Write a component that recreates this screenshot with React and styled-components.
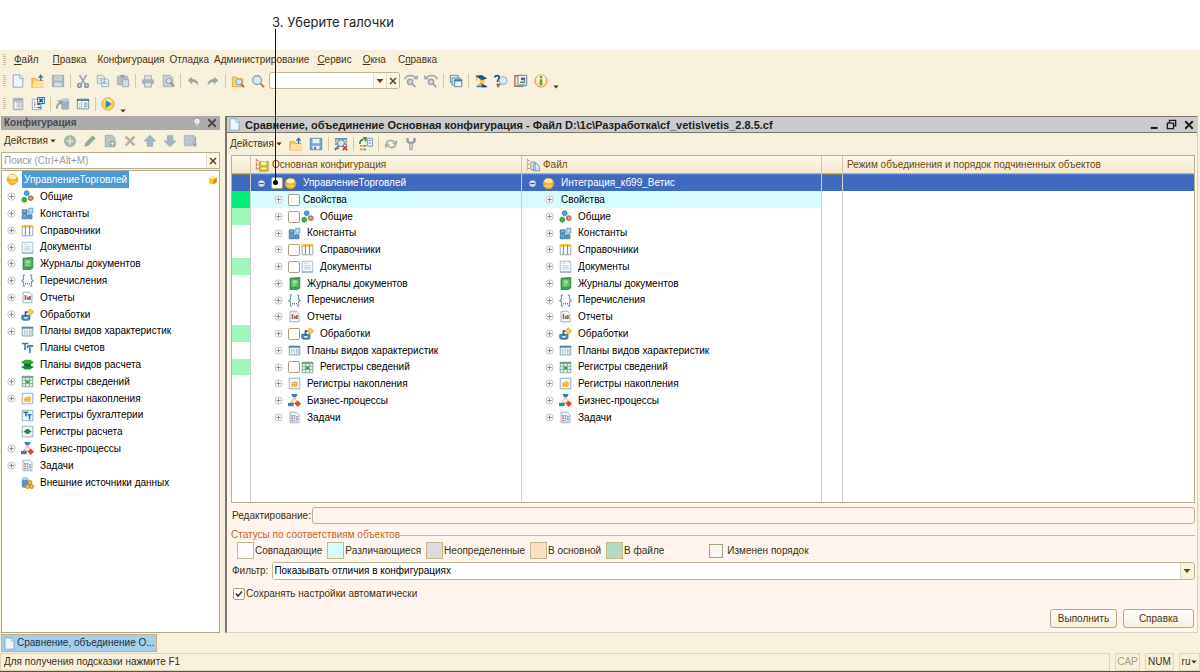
import React, { useState } from 'react';
import styled, { createGlobalStyle, css } from 'styled-components';

const GlobalStyle = createGlobalStyle`
  * {
    box-sizing: border-box;
  }

  body {
    margin: 0;
    background: #ffffff;
    color: #4a3510;
    font-family: 'Liberation Sans', Arial, sans-serif;
    font-size: 10px;
    line-height: 14px;
  }

  button, input, select {
    font: inherit;
    color: inherit;
  }

  svg {
    flex: none;
  }
`;

const Page = styled.div`
  display: flex;
  flex-direction: column;
  min-height: 100vh;
  position: relative;
`;

const Note = styled.div`
  height: 50px;
  padding: 12px 0 0 272px;
  color: #1c1c1c;
  font-family: Inter, 'Noto Sans', sans-serif;
  font-size: 13px;
  line-height: 20px;
`;

const Pointer = styled.div`
  position: absolute;
  z-index: 2;
  top: 29px;
  left: 275px;
  width: 1px;
  height: 153px;
  background: #111111;

  &::after {
    content: '';
    position: absolute;
    bottom: -3px;
    left: -2px;
    width: 5px;
    height: 5px;
    border-radius: 50%;
    background: #000000;
  }
`;

const Shell = styled.div`
  flex: 1;
  display: flex;
  flex-direction: column;
  background: #f7f0dd;
  border-bottom: 1px solid #4f564f;
`;

const Bar = styled.div`
  display: flex;
  align-items: center;
  height: ${props => props.height || 23}px;
  padding-left: ${props => props.indent || 0}px;
`;

const Grip = styled.span`
  width: 3px;
  height: 12px;
  margin: 0 2px 0 3px;
  background: repeating-linear-gradient(#cdc3a4 0 1px, transparent 1px 2px);
`;

const Separator = styled.span`
  width: 1px;
  height: 14px;
  margin: 0 2px;
  background: #d3c9a8;
`;

const PlainButton = styled.button`
  display: flex;
  align-items: center;
  justify-content: center;
  padding: 0;
  border: 0;
  background: none;
  white-space: nowrap;
`;

const MenuItem = styled(PlainButton)`
  margin-left: ${props => props.gap}px;
`;

const ToolButton = styled(PlainButton)`
  width: 20px;
  height: 20px;
`;

const ActionsButton = styled(PlainButton)`
  gap: 2px;
  margin-right: 4px;
`;

const OverflowButton = styled(PlainButton)`
  align-self: flex-end;
  width: 10px;
  height: 10px;
`;

const SearchCombo = styled.div`
  display: flex;
  width: 131px;
  height: 17px;
  margin: 0 1px;
  border: 1px solid #bdb690;
  border-radius: 3px;
  background: #ffffff;
  overflow: hidden;
`;

const BareInput = styled.input`
  flex: 1;
  min-width: 0;
  padding: 0 2px;
  border: 0;
  outline: 0;
  background: transparent;

  &::placeholder {
    color: #9b9b9b;
    opacity: 1;
  }
`;

const ComboButton = styled(PlainButton)`
  width: 13px;
  border-left: 1px solid #e2dcc4;
  background: #fbf7ea;
  color: #5f420c;
`;

const Workspace = styled.main`
  flex: 1;
  display: flex;
  gap: 5px;
  padding: 0 2px 0 1px;
`;

const SidePanel = styled.aside`
  display: flex;
  flex-direction: column;
  flex: 0 0 219px;
`;

const PanelTitle = styled.div`
  display: flex;
  align-items: center;
  height: 14px;
  padding: 0 3px;
  background: #ababab;
  color: #4b4b4b;
  font-weight: bold;

  span {
    flex: 1;
  }
`;

const SearchBox = styled.div`
  display: flex;
  height: 17px;
  border: 1px solid #b6b08c;
  background: #ffffff;
`;

const Tree = styled.ul`
  flex: 1;
  margin: 1px 0 0;
  padding: 0;
  border: 1px solid #aca98c;
  background: #ffffff;
  color: #000000;
  list-style: none;
`;

const TreeRow = styled.li`
  display: flex;
  align-items: center;
  height: 17px;
  padding: 0 1px 0 ${props => (props.$root ? 4 : 2)}px;

  &:nth-child(5n) {
    height: 16px;
  }
`;

const TreeLabel = styled.span`
  margin-left: 6px;
  white-space: nowrap;
`;

const SelectedLabel = styled.span`
  margin: 0 auto 0 3px;
  padding: 0 2px;
  background: #4a9bd6;
  color: #ffffff;
  line-height: 17px;
`;

const Expander = styled(PlainButton)`
  width: 14px;
  height: 14px;
  margin-right: 3px;
`;

const ExpanderGap = styled.span`
  width: 17px;
`;

const Panel = styled.section`
  flex: 1;
  min-width: 0;
  display: flex;
  flex-direction: column;
  border: solid #77776e;
  border-width: 1px 0 0 2px;
  border-right: 1px solid #d5d2c8;
  border-bottom: 1px solid #d5d2c8;
`;

const WindowTitle = styled.div`
  display: flex;
  align-items: center;
  gap: 4px;
  height: 16px;
  padding-left: 1px;
  border-bottom: 1px solid #77776e;
  background: #cbcbcb;
  color: #1d1d1d;

  h1 {
    flex: 1;
    margin: 0;
    font-size: 11px;
    white-space: nowrap;
    overflow: hidden;
  }
`;

const WindowButtons = styled.div`
  display: flex;
  gap: 2px;
`;

const WindowButton = styled(PlainButton)`
  width: 16px;
  height: 14px;
`;

const Body = styled.div`
  flex: 1;
  display: flex;
  flex-direction: column;
  padding: 0 2px 4px 4px;
  background: #fff5ee;
  color: #3b2f14;
`;

const TableWrap = styled.div`
  flex: 1;
  display: grid;
  border: 1px solid #b6b08c;
  background: #ffffff;
`;

const Table = styled.table`
  width: 100%;
  height: 100%;
  table-layout: fixed;
  border-collapse: separate;
  border-spacing: 0;
`;

const Column = styled.col`
  width: ${props => props.$size};
`;

const HeadCell = styled.th`
  height: 18px;
  padding: 0 0 0 4px;
  border-right: 1px solid #cfc8ae;
  border-bottom: 1px solid #c0b184;
  background: linear-gradient(#faf6ea, #f6e9cf);
  color: #6b4a0c;
  font-weight: normal;
  text-align: left;

  &:last-child {
    border-right: 0;
  }
`;

const HeadContent = styled.span`
  display: flex;
  align-items: center;
  gap: 3px;
`;

const Cell = styled.td`
  padding: 0;
  border-right: 1px solid #d0d0d0;
  background: ${props => props.$fill || 'transparent'};

  &:last-child {
    border-right: 0;
  }
`;

const Row = styled.tr`
  height: 17px;
  color: #000000;

  &:nth-child(4n) {
    height: 16px;
  }

  ${props => props.$selected && css`
    color: #ffffff;

    ${Cell} {
      background: #3e6bbf;
      border-top: 1px dotted #8d9a80;
    }
  `}
`;

const FillerRow = styled.tr`
  height: auto;
`;

const CellContent = styled.div`
  display: flex;
  align-items: center;
  height: 14px;
  padding-left: ${props => props.$indent}px;
  white-space: nowrap;
`;

const CellLabel = styled.label`
  margin-left: ${props => props.$gap}px;
`;

const Check = styled.input`
  appearance: none;
  width: 12px;
  height: 12px;
  margin: 0 1px 0 0;
  border: 1px solid #ab9f7d;
  border-radius: 2px;
  background: #ffffff;
`;

const Field = styled.div`
  display: flex;
  align-items: center;
  gap: ${props => props.$gap}px;
  margin-top: ${props => props.$top}px;
  padding-left: 1px;
`;

const TextInput = styled.input`
  flex: 1;
  min-width: 0;
  height: 17px;
  border: 1px solid #b9b592;
  border-radius: 3px;
  background: #fff5ee;
`;

const Statuses = styled.fieldset`
  display: flex;
  align-items: center;
  min-width: 0;
  margin: 4px 0 0;
  padding: 0 0 0 6px;
  border: 0;
  border-top: 1px solid #c2c0a2;

  legend {
    margin-left: -6px;
    padding: 0;
    color: #c0661c;
  }
`;

const Status = styled.span`
  display: flex;
  align-items: center;
  gap: 1px;
  margin-right: 5px;
  white-space: nowrap;

  &::before {
    content: '';
    width: 15px;
    height: 15px;
    border: 1px solid #c3b990;
    background: ${props => props.$color};
  }
`;

const OrderLabel = styled.label`
  display: flex;
  align-items: center;
  gap: 4px;
  margin-left: 40px;
`;

const OrderCheck = styled(Check)`
  width: 14px;
  height: 14px;
  margin: 0;
  border-radius: 0;
  background: #f8f6f6;
`;

const SelectBox = styled.div`
  flex: 1;
  display: grid;
  grid-template-columns: 1fr 14px;
  align-items: center;
  height: 18px;
  border: 1px solid #b9b592;
  border-radius: 3px;
  background: #ffffff;
  overflow: hidden;

  svg {
    grid-area: 1 / 2;
    justify-self: center;
    pointer-events: none;
    color: #5f420c;
  }
`;

const Select = styled.select`
  grid-area: 1 / 1 / 2 / 3;
  appearance: none;
  height: 16px;
  padding: 0 1px;
  border: 0;
  outline: 0;
  background: linear-gradient(to left, #f8f1de 13px, #ded8c0 13px 14px, #ffffff 14px);
  color: #000000;
`;

const AutoSave = styled.label`
  display: flex;
  align-items: center;
  gap: 1px;
  height: 14px;
  margin: 7px 0 0 2px;
`;

const TickBox = styled.span`
  display: grid;

  input, svg {
    grid-area: 1 / 1;
  }

  input {
    margin: 0;
  }

  svg {
    place-self: center;
    pointer-events: none;
    visibility: ${props => (props.$on ? 'visible' : 'hidden')};
  }
`;

const Footer = styled.div`
  display: flex;
  justify-content: flex-end;
  gap: 6px;
  margin-top: 8px;
  padding-right: 1px;
`;

const PushButton = styled.button`
  min-width: ${props => props.$width}px;
  height: 19px;
  padding: 0 6px;
  border: 1px solid #b0ab85;
  border-radius: 3px;
  background: linear-gradient(#ffffff, #f6f0dc);
  color: #4a3510;
`;

const TaskBar = styled.div`
  display: flex;
  align-items: center;
  height: 20px;
  padding-left: 1px;
`;

const TaskButton = styled(PlainButton)`
  gap: 1px;
  min-width: 151px;
  height: 18px;
  padding: 0 1px;
  justify-content: flex-start;
  border: 1px solid #c2b187;
  background: #a6cdea;
  color: #1e3242;
`;

const StatusBar = styled.footer`
  display: flex;
  gap: 5px;
  height: 18px;
`;

const StatusCell = styled.div`
  display: flex;
  align-items: center;
  justify-content: ${props => (props.$wide ? 'flex-start' : 'center')};
  flex: ${props => (props.$wide ? '1' : 'none')};
  min-width: ${props => props.$width || 0}px;
  gap: 1px;
  padding: 0 ${props => (props.$wide ? 3 : 1)}px;
  border: 1px solid #ddd5b8;
  color: ${props => (props.$off ? '#ab9f78' : '#3f2f10')};
`;

const sheet = (fill = '#f6fafd', line = '#8ba3b5') => (
    <path d="M2.5 1.5h8l3 3v10h-11z" fill={fill} stroke={line} />
);

const lens = (x, y) => (
    <>
        <path d={`M${x + 2} ${y + 2}l4 4`} stroke="#b5694a" strokeWidth="2" />
        <circle cx={x} cy={y} r="3.5" fill="#cfe5f5" stroke="#8295a8" />
    </>
);

const folder = (
    <path d="M1.5 3.5h5l1 2h6v9h-12z" fill="#f6d277" stroke="#d6a748" />
);

const icons = {
    file: (
        <>
            <path d="M2.5 1h8l3 3v11h-11z" fill="#eef6fd" stroke="#7fa1bf" />
            <path d="M10 1v4h4" fill="#ffffff" stroke="#7fa1bf" />
        </>
    ),
    open: (
        <>
            <path d="M1 5h5l1 2h7v8H1z" fill="#f4c65c" stroke="#d9ab50" />
            <path d="M3 8h12v7H1.500z" fill="#fbe19a" />
            <path d="M11 8V2M8.500 4.500L11 1.500l2.500 3" fill="none" stroke="#3d7796" strokeWidth="1.500" />
        </>
    ),
    saveOff: (
        <>
            <path d="M1.500 1.500h13v13h-13z" fill="#aebac5" stroke="#9aa8b5" />
            <path d="M4 2h8v5H4zM4 10h8v4H4z" fill="#d9dfe3" />
            <path d="M5 3.500h6M5 5.500h6" stroke="#a8b1b9" />
        </>
    ),
    save: (
        <>
            <path d="M1.500 1.500h13v13h-13z" fill="#7ba6cb" stroke="#5480a8" />
            <path d="M4 2h8v5H4zM4 10h8v4H4z" fill="#e4eff8" />
            <path d="M6 11h2v3H6z" fill="#4674a0" />
        </>
    ),
    cut: (
        <>
            <path d="M4 1l6 10M12 1L6 11" stroke="#9aa7b4" strokeWidth="2" />
            <circle cx="4" cy="13" r="2" fill="none" stroke="#8499b0" strokeWidth="2" />
            <circle cx="12" cy="13" r="2" fill="none" stroke="#8499b0" strokeWidth="2" />
        </>
    ),
    copy: (
        <>
            <path d="M1.500 1.500h6l2 2v7h-8zM6.500 5.500h6l2 2v7h-8z" fill="#e9f0f4" stroke="#93a8bb" />
            <path d="M3 5h4M3 7h3M8 9h5M8 11h5" stroke="#9cb3c5" />
        </>
    ),
    paste: (
        <>
            <path d="M1.500 2.500h12v10h-12z" fill="#b4bdc4" stroke="#a7b1ba" />
            <path d="M5 1h5v3H5z" fill="#96a2ad" />
            <path d="M7.500 6.500h7v8h-7z" fill="#d5dadb" stroke="#9aa6b0" />
        </>
    ),
    print: (
        <>
            <path d="M4 2h8v5H4z" fill="#dde2e5" stroke="#a3adb5" />
            <rect x="1" y="6" width="14" height="6" rx="2" fill="#a6b2bc" />
            <path d="M4 10h8v5H4z" fill="#d9dfe2" stroke="#9ca8b2" />
        </>
    ),
    preview: (
        <>
            {sheet('#c5cdd2', '#a3aeb7')}
            <circle cx="9" cy="8" r="3" fill="#dce1e3" stroke="#8796a4" />
            <path d="M11 10l4 4" stroke="#a18a86" strokeWidth="2" />
        </>
    ),
    undo: <path d="M2 7l5-4v3c5 0 7 2 7 7-2-3-4-4-7-4v3z" fill="#98aaa0" />,
    redo: <path d="M14 7L9 3v3c-5 0-7 2-7 7 2-3 4-4 7-4v3z" fill="#98aaa0" />,
    folderFind: <>{folder}{lens(9, 9)}</>,
    find: (
        <>
            <path d="M10 10l5 5" stroke="#b5694a" strokeWidth="2" />
            <circle cx="7" cy="7" r="5" fill="#d8eafa" stroke="#8f9fb0" strokeWidth="1.500" />
        </>
    ),
    findNext: (
        <>
            <path d="M1 6c1-5 11-6 13 0" fill="none" stroke="#a5b0ba" strokeWidth="2" />
            <path d="M10 6h6V1z" fill="#a5b0ba" />
            <circle cx="7" cy="9" r="3" fill="#ccd5dc" stroke="#9aa5ae" strokeWidth="1.500" />
            <path d="M9 11l4 4" stroke="#a89c9a" strokeWidth="2" />
        </>
    ),
    findPrev: (
        <>
            <path d="M15 6C14 1 4 0 2 6" fill="none" stroke="#a5b0ba" strokeWidth="2" />
            <path d="M6 6H0V1z" fill="#a5b0ba" />
            <circle cx="8" cy="9" r="3" fill="#ccd5dc" stroke="#9aa5ae" strokeWidth="1.500" />
            <path d="M10 11l4 4" stroke="#a89c9a" strokeWidth="2" />
        </>
    ),
    windows: (
        <>
            <path d="M1.500 1.500h9v8h-9z" fill="#d4e5f2" stroke="#5a86a8" />
            <path d="M3.500 4.500h9v8h-9z" fill="#d4e5f2" stroke="#5a86a8" />
            <path d="M6.500 6.500h8v8h-8z" fill="#f2f8fc" stroke="#47799e" />
            <path d="M6 7.500h9" stroke="#47799e" strokeWidth="2" />
        </>
    ),
    graduate: (
        <>
            <path d="M6 6h6v5H7z" fill="#f5c26b" />
            <path d="M1 2l8-1 6 4-6 2z" fill="#235778" />
            <path d="M3 3v5" stroke="#d99c34" />
            <path d="M2 15l6-5 6 5z" fill="#2e83b8" />
            <path d="M2 13l6-3 1 4z" fill="#eeb04b" />
            <path d="M9 11l6 3v1H9z" fill="#174d70" />
        </>
    ),
    helpFind: (
        <>
            <path d="M1 4c0-3 5-3 5 0 0 2-2 2-2 5M4 11v2" fill="none" stroke="#235778" strokeWidth="2" />
            <path d="M7 11l-3 4" stroke="#b5694a" strokeWidth="2" />
            <circle cx="10.500" cy="7.500" r="4.500" fill="#d8eafa" stroke="#8fa5b8" />
        </>
    ),
    book: (
        <>
            <path d="M1 2h9v12H1z" fill="#f5e4d0" stroke="#b0714d" strokeWidth="1.500" />
            <path d="M4.500 1.500h10v12h-10z" fill="#eef6fb" stroke="#4c7ca3" />
            <path d="M8 4h4v3H8z" fill="#2b6fb3" />
            <path d="M7 9.500h6" stroke="#3f9b54" strokeWidth="2" />
            <path d="M12 4v4" stroke="#cf4a35" strokeWidth="1.500" />
            <path d="M6 12h7" stroke="#7ba6c8" />
        </>
    ),
    info: (
        <>
            <circle cx="8" cy="8" r="7" fill="#f9e29a" stroke="#d08a58" />
            <circle cx="8" cy="6" r="5" fill="#fdf3cf" />
            <path d="M8 6v7" stroke="#6f9a35" strokeWidth="3" />
            <circle cx="8" cy="3.500" r="1.500" fill="#6f9a35" />
        </>
    ),
    config: (
        <>
            <path d="M2.500 1.500h11v13h-11z" fill="#c6ccd0" stroke="#a5adb3" />
            <path d="M3 3h10" stroke="#a0a9b0" strokeWidth="2" />
            <path d="M5 6v6h3M5 8h3M10 8h2M10 12h2" fill="none" stroke="#f2f2ee" strokeWidth="1.500" />
        </>
    ),
    configTree: (
        <>
            <path d="M1.500 2.500h10v12h-10z" fill="#ffffff" stroke="#7fa3c0" />
            <path d="M4 5v7h5M4 8h3" fill="none" stroke="#b6664a" strokeDasharray="2 1" />
            <path d="M7 8.500h4M8 12h4" stroke="#3c80b6" strokeWidth="2" />
            <path d="M7.500.500h8v7h-8z" fill="#d8ebf8" stroke="#1d5f90" />
            <path d="M9.500 2l4 4M13.500 2l-4 4" stroke="#174d78" strokeWidth="1.500" />
        </>
    ),
    database: (
        <>
            <path d="M6 3v10c0 2 9 2 9 0V3z" fill="#9fb1c1" />
            <ellipse cx="10.500" cy="3" rx="4.500" ry="2" fill="#bfcbd5" />
            <path d="M1 13c0-5 2-6 5-6" fill="none" stroke="#8ba09a" strokeWidth="2" />
            <path d="M1 4h6v5z" fill="#8ba09a" />
        </>
    ),
    windowForm: (
        <>
            <path d="M1.500 2.500h13v11h-13z" fill="#f7fafc" stroke="#6789a4" />
            <path d="M1 3.500h14" stroke="#4a7ba1" strokeWidth="2" />
            <path d="M6.500 5v8" stroke="#9ab0c1" />
            <path d="M9 7h4M9 9h4M9 11h4" stroke="#5d8bb0" />
            <path d="M3 8h2M3 11h2" stroke="#cc7b4e" />
        </>
    ),
    play: (
        <>
            <circle cx="8" cy="8" r="7" fill="#fbd257" stroke="#dfa03c" />
            <path d="M3 6c2-5 8-5 10 0z" fill="#fdf0b7" />
            <path d="M5.500 3.500l6.500 4.500-6.500 4.500z" fill="#2f87b4" />
        </>
    ),
    add: (
        <>
            <circle cx="8" cy="8" r="7" fill="#a9b6ae" />
            <path d="M8 4v8M4 8h8" stroke="#dbe2da" strokeWidth="2" />
        </>
    ),
    edit: <path d="M2 14l1-4 8-8 3 3-8 8z" fill="#8ea99a" stroke="#a0b2ac" />,
    addCopy: (
        <>
            {sheet('#bac4ca', '#9faab2')}
            <circle cx="11" cy="11" r="4" fill="#9db4a4" />
            <path d="M11 9v4M9 11h4" stroke="#edf0ea" />
        </>
    ),
    remove: <path d="M3 3l10 10M13 3L3 13" stroke="#bcb0aa" strokeWidth="3" />,
    up: <path d="M8 1.500L14.500 8H11v6H5V8H1.500z" fill="#a3b7c8" stroke="#97abbd" />,
    down: <path d="M8 14.500L1.500 8H5V2h6v6h3.500z" fill="#a3b7c8" stroke="#97abbd" />,
    sort: (
        <>
            <path d="M1 1h12v13H1z" fill="#b1bcc6" />
            <path d="M1 5h12M1 9h12M5 1v13M9 1v13" stroke="#c5cdd3" />
            <path d="M14 3v8" stroke="#8a9bab" strokeWidth="1.500" />
            <path d="M11.500 11H16l-2 4z" fill="#8a9bab" />
        </>
    ),
    cube: (
        <>
            <path d="M2 5l5-3 7 2v7l-5 4-7-2z" fill="#f6c21c" />
            <path d="M9 7l5-3v7l-5 4z" fill="#cf8d0a" />
            <path d="M2 5l5-3 7 2-5 3z" fill="#ffe873" />
        </>
    ),
    ball: (
        <>
            <circle cx="8" cy="8" r="6.500" fill="#f1a91f" stroke="#e0a443" />
            <ellipse cx="8" cy="5" rx="5" ry="3" fill="#ffedb4" />
            <ellipse cx="8" cy="11" rx="5" ry="2" fill="#fbc648" />
        </>
    ),
    common: (
        <>
            <circle cx="7" cy="4" r="3" fill="#4aa2dc" stroke="#2f80b9" />
            <circle cx="4" cy="12" r="3" fill="#34bd3c" stroke="#17902c" />
            <circle cx="12" cy="10" r="3" fill="#cb7e58" stroke="#a65b3d" />
            <circle cx="12" cy="10" r="1" fill="#f2d3b8" />
        </>
    ),
    constants: (
        <>
            <path d="M1.500 3.500h6v5h-6zM1.500 9.500h6v5h-6zM8.500 9.500h5v5h-5z" fill="#5b9ac6" stroke="#3c77a3" />
            <path d="M9.500 1.500h5v6h-5z" fill="#b9daf0" stroke="#5b96c0" />
            <path d="M3 5h3M3 11h3" stroke="#a9d1ec" />
        </>
    ),
    catalogs: (
        <>
            <path d="M1.500 2.500h13v12h-13z" fill="#ffffff" stroke="#8499a8" />
            <path d="M1 3h14" stroke="#f2c52c" strokeWidth="3" />
            <path d="M5.500 2v12M10.500 2v12" stroke="#7e97aa" strokeWidth="1.500" />
        </>
    ),
    documents: (
        <>
            <path d="M1.500 1.500h13v13h-13z" fill="#f4f9fd" stroke="#9ab2c6" />
            <path d="M4 4h4M4 7h8M4 9h8M4 11h8" stroke="#b4cadb" />
            <path d="M1 15h14" stroke="#7895ad" />
        </>
    ),
    journals: (
        <>
            <path d="M2.500 1.500l12-1v13l-3 2h-9z" fill="#34a053" stroke="#2c8443" />
            <path d="M4 3h9v9H4z" fill="#63c368" />
            <path d="M6 5h5M6 7h5M6 10h3" stroke="#d6f2d0" />
        </>
    ),
    enums: (
        <>
            <path d="M5 1.500H3v5l-2 2 2 1v5h2M11 1.500h2v5l2 2-2 1v5h-2" fill="none" stroke="#7d9cb5" strokeWidth="1.500" />
            <path d="M5 12h1M7.500 12h1M10 12h1" stroke="#315b80" strokeWidth="2" />
        </>
    ),
    reports: (
        <>
            {sheet()}
            <path d="M5.500 5v6" stroke="#d04444" strokeWidth="2" />
            <path d="M8.500 7v4" stroke="#3c8852" strokeWidth="2" />
            <path d="M11 6v5" stroke="#c5462e" strokeWidth="2" />
        </>
    ),
    processing: (
        <>
            <path d="M1 9h10v5l-2 1H3l-2-1z" fill="#4f8fbd" stroke="#2d658f" />
            <path d="M4 11h4v2H4z" fill="#e5f2fa" />
            <path d="M5.500 11V5h4" fill="none" stroke="#385a73" strokeWidth="2" />
            <path d="M11.500 1l4 4-4 4-4-4z" fill="#fbd04a" stroke="#d7a02a" />
        </>
    ),
    charKinds: (
        <>
            <path d="M1.500 2.500h13v11h-13z" fill="#ecf3f8" stroke="#7593aa" />
            <path d="M1 3.500h14" stroke="#55809f" strokeWidth="2" />
            <path d="M4.500 6v6M7.500 6v6M10.500 6v6M12.500 6v6" stroke="#a0b5c5" />
        </>
    ),
    accounts: (
        <path d="M1 3h8M5 3v8M8 6h6v1M11 6v9M8 6v3" fill="none" stroke="#3f7fae" strokeWidth="2" />
    ),
    calcKinds: (
        <>
            <path d="M0 11l5-2h6l5 2-5 3H5z" fill="#1c8a30" />
            <path d="M0 5l5-3h6l5 3-5 4H5z" fill="#2fae3a" />
            <path d="M4 7h8v3H4z" fill="#14702a" />
        </>
    ),
    infoRegs: (
        <>
            <path d="M1.500 1.500h13v13h-13z" fill="#e4f1ea" stroke="#7b9c92" />
            <path d="M1 2.500h14" stroke="#6f9888" strokeWidth="2" />
            <path d="M1 6.500h14M1 10.500h14M5.500 2v12M10.500 2v12" stroke="#74ad8a" />
            <path d="M6 7h4v3H6z" fill="#3ca15a" />
        </>
    ),
    accumRegs: (
        <>
            <path d="M1.500 1.500h13v13h-13z" fill="#f3f8fc" stroke="#829fb7" />
            <path d="M4 8c0-2 8-4 8-1v3c0 3-8 3-8 1z" fill="#efa81f" />
            <path d="M5 8c2 1 5 0 6-2M5 11c2 1 5 0 6-2" fill="none" stroke="#ffe48a" />
        </>
    ),
    acctRegs: (
        <>
            <path d="M1.500 1.500h13v13h-13z" fill="#edf5fb" stroke="#829fb7" />
            <path d="M3 4h6M6 4v5M8 7h5M10.500 7v6" stroke="#2f77ad" strokeWidth="2" />
        </>
    ),
    calcRegs: (
        <>
            <path d="M1.500 1.500h13v13h-13z" fill="#f3f8fc" stroke="#829fb7" />
            <path d="M3 8l4-3h2l4 3-4 3H7z" fill="#258e38" />
        </>
    ),
    business: (
        <>
            <path d="M4 0h8l-2 4H6z" fill="#2f83b8" />
            <path d="M8 4L3 11h9z" fill="#fbeedd" stroke="#d09a78" />
            <path d="M0 11h7v4H0z" fill="#3b7fb4" />
            <path d="M12 8l4 4-4 4-4-4z" fill="#df4827" />
        </>
    ),
    tasks: (
        <>
            {sheet()}
            <path d="M5 5v8" stroke="#c76d64" strokeDasharray="2 1" strokeWidth="2" />
            <path d="M8 5v8M11 6v7" stroke="#7596b1" strokeDasharray="2 1" strokeWidth="2" />
        </>
    ),
    external: (
        <>
            <path d="M1 3v10c0 2 8 2 8 0V3z" fill="#4e98cd" />
            <ellipse cx="5" cy="3" rx="4" ry="2" fill="#a7d4ef" />
            <circle cx="11" cy="8" r="2.500" fill="#f2bd3e" stroke="#b97a19" />
            <circle cx="8" cy="13" r="2.500" fill="#f2bd3e" stroke="#b97a19" />
            <circle cx="13" cy="13" r="2.500" fill="#f2bd3e" stroke="#b97a19" />
        </>
    ),
    compare: (
        <>
            <path d="M1 2h14M1 8h3M12 8h3M1 13h5" stroke="#5b97c4" strokeWidth="2" />
            <circle cx="8" cy="7" r="4" fill="#d2e5f2" stroke="#47718e" />
            <path d="M5 10l-4 5" stroke="#b5694a" strokeWidth="2" />
            <path d="M1 5h2M13 5h2" stroke="#d06b3d" strokeWidth="2" />
            <path d="M10 10l5 5M15 10l-5 5" stroke="#dc3a2a" strokeWidth="2" />
        </>
    ),
    merge: (
        <>
            <path d="M1 8c0-3 1-5 4-5" fill="none" stroke="#2c9550" strokeWidth="2" />
            <path d="M4 0h5L8 6z" fill="#2c9550" />
            <path d="M9.500 1.500h6v9h-6z" fill="#e8f2fa" stroke="#6a91b0" />
            <path d="M11 4h3M11 7h3" stroke="#6a91b0" />
            <path d="M1 10h3M1 14h3" stroke="#d49a32" strokeWidth="2" />
            <path d="M5 10h3M5 14h3" stroke="#4ea463" strokeWidth="2" />
        </>
    ),
    refresh: (
        <>
            <path d="M3 8c0-5 6-5 9-2M13 8c0 5-6 5-9 2" fill="none" stroke="#a4b3a7" strokeWidth="2" />
            <path d="M9 8h6V3zM7 8H1v5z" fill="#a4b3a7" />
        </>
    ),
    wrench: (
        <>
            <path d="M4 1v4l3 2h2l3-2V1" fill="none" stroke="#9da5a8" strokeWidth="3" />
            <path d="M8 7v8" stroke="#9da5a8" strokeWidth="4" />
            <path d="M8 8v6" stroke="#dfe3e3" strokeWidth="1.500" />
        </>
    ),
    mainConfig: (
        <>
            <path d="M1.500 1v13M2 3h3M2 7h3M2 12h3" stroke="#b45936" strokeDasharray="2 1" />
            <path d="M5 4h10v11H5z" fill="#d8b932" stroke="#b19c2c" />
            <path d="M7 4h6v4H7z" fill="#f7f0bd" />
            <path d="M7 11h6v2H7z" fill="#fff3a8" />
        </>
    ),
    fileConfig: (
        <>
            <path d="M1.500 1v13M2 3h3M2 7h3M2 12h3" stroke="#c7764e" strokeDasharray="2 1" />
            <path d="M5.500 4.500h5v9h-5zM8.500 6.500h4l3 3v5h-7z" fill="#dcebf7" stroke="#6e94b5" />
        </>
    ),
    pin: (
        <>
            <circle cx="8" cy="5" r="4" fill="#f5f5f5" />
            <circle cx="8" cy="5" r="1" fill="#9b9b9b" />
            <path d="M8 9v4" stroke="#d8d8d8" strokeWidth="2" />
        </>
    ),
    close: <path d="M2 2l12 12M14 2L2 14" stroke="currentColor" strokeWidth="3" />,
    minimize: <path d="M4 13h10" stroke="currentColor" strokeWidth="3" />,
    restore: (
        <>
            <path d="M5 6V2h9v8h-3" fill="none" stroke="currentColor" strokeWidth="2" />
            <path d="M2 6h9v8H2z" fill="none" stroke="currentColor" strokeWidth="2" />
        </>
    ),
    caret: <path d="M1 4h14l-7 8z" fill="currentColor" />,
    tick: <path d="M2 7l4 5 8-9" fill="none" stroke="#2b2b2b" strokeWidth="3" />,
    plus: (
        <>
            <circle cx="8" cy="8" r="6.500" fill="#fbfbfb" stroke="#b9b9b9" strokeWidth="1.500" />
            <path d="M8 4v8M4 8h8" stroke="#7c7c7c" strokeWidth="1.500" />
        </>
    ),
    minus: (
        <>
            <circle cx="8" cy="8" r="6" fill="#d9e3f3" stroke="#6c8cc6" />
            <path d="M4 8h8" stroke="#3b5790" strokeWidth="2" />
        </>
    ),
};

function Icon({ name, size = 14 }) {
    return (
        <svg width={size} height={size} viewBox="0 0 16 16" aria-hidden="true">
            {icons[name]}
        </svg>
    );
}

const menu = [
    { key: 'Ф', rest: 'айл', gap: 6 },
    { key: 'П', rest: 'равка', gap: 14 },
    { rest: 'Конфигурация', gap: 11 },
    { rest: 'Отладка', gap: 5 },
    { rest: 'Администрирование', gap: 5 },
    { key: 'С', rest: 'ервис', gap: 8 },
    { key: 'О', rest: 'кна', gap: 11 },
    { before: 'С', key: 'п', rest: 'равка', gap: 12 },
];

const mainTools = [
    ['file', 'Новый'], ['open', 'Открыть'], ['saveOff', 'Сохранить'], null,
    ['cut', 'Вырезать'], ['copy', 'Копировать'], ['paste', 'Вставить'], null,
    ['print', 'Печать'], ['preview', 'Просмотр'], null,
    ['undo', 'Отменить'], ['redo', 'Вернуть'], null,
    ['folderFind', 'Глобальный поиск'], ['find', 'Найти'],
];

const findTools = [
    ['findNext', 'Найти далее'], ['findPrev', 'Найти ранее'], null,
    ['windows', 'Окна'], null,
    ['graduate', 'Синтакс-помощник'], ['helpFind', 'Поиск в справке'],
    ['book', 'Содержание'], ['info', 'О программе'],
];

const configTools = [
    ['config', 'Открыть конфигурацию'], ['configTree', 'Закрыть конфигурацию'], null,
    ['database', 'Обновить базу'], ['windowForm', 'Окно конфигурации'], null,
    ['play', 'Начать отладку'],
];

const treeTools = [
    ['add', 'Добавить'], ['edit', 'Изменить'], ['addCopy', 'Скопировать'], ['remove', 'Удалить'],
    ['up', 'Вверх'], ['down', 'Вниз'], ['sort', 'Упорядочить'],
];

const compareTools = [
    ['open', 'Открыть'], ['save', 'Сохранить'], null,
    ['compare', 'Сравнить'], null,
    ['merge', 'Порядок'], null,
    ['refresh', 'Обновить'], ['wrench', 'Настройка'],
];

const treeItems = [
    { icon: 'common', name: 'Общие', open: true },
    { icon: 'constants', name: 'Константы', open: true },
    { icon: 'catalogs', name: 'Справочники', open: true },
    { icon: 'documents', name: 'Документы', open: true },
    { icon: 'journals', name: 'Журналы документов', open: true },
    { icon: 'enums', name: 'Перечисления', open: true },
    { icon: 'reports', name: 'Отчеты', open: true },
    { icon: 'processing', name: 'Обработки', open: true },
    { icon: 'charKinds', name: 'Планы видов характеристик', open: true },
    { icon: 'accounts', name: 'Планы счетов' },
    { icon: 'calcKinds', name: 'Планы видов расчета' },
    { icon: 'infoRegs', name: 'Регистры сведений', open: true },
    { icon: 'accumRegs', name: 'Регистры накопления', open: true },
    { icon: 'acctRegs', name: 'Регистры бухгалтерии' },
    { icon: 'calcRegs', name: 'Регистры расчета' },
    { icon: 'business', name: 'Бизнес-процессы', open: true },
    { icon: 'tasks', name: 'Задачи', open: true },
    { icon: 'external', name: 'Внешние источники данных' },
];

const compareRows = [
    { icon: 'ball', name: 'УправлениеТорговлей', other: 'Интеграция_кб99_Ветис', check: true, root: true },
    { name: 'Свойства', check: true, mark: '#00ee78', fill: '#d6fdfb' },
    { icon: 'common', name: 'Общие', check: true, mark: '#a0f6ba' },
    { icon: 'constants', name: 'Константы' },
    { icon: 'catalogs', name: 'Справочники', check: true },
    { icon: 'documents', name: 'Документы', check: true, mark: '#a0f6ba' },
    { icon: 'journals', name: 'Журналы документов' },
    { icon: 'enums', name: 'Перечисления' },
    { icon: 'reports', name: 'Отчеты' },
    { icon: 'processing', name: 'Обработки', check: true, mark: '#a0f6ba' },
    { icon: 'charKinds', name: 'Планы видов характеристик' },
    { icon: 'infoRegs', name: 'Регистры сведений', check: true, mark: '#a0f6ba' },
    { icon: 'accumRegs', name: 'Регистры накопления' },
    { icon: 'business', name: 'Бизнес-процессы' },
    { icon: 'tasks', name: 'Задачи' },
];

const statuses = [
    { name: 'Совпадающие', color: '#ffffff' },
    { name: 'Различающиеся', color: '#d6fdfb' },
    { name: 'Неопределенные', color: '#dcdcdc' },
    { name: 'В основной', color: '#ffe0c2' },
    { name: 'В файле', color: '#b5dcc3' },
];

function Tools({ items }) {
    return items.map((item, index) => (
        item
            ? <ToolButton key={index} aria-label={item[1]}><Icon name={item[0]} /></ToolButton>
            : <Separator key={index} />
    ));
}

function ConfigTree() {
    return (
        <SidePanel>
            <PanelTitle>
                <span>Конфигурация</span>
                <ToolButton aria-label="Закрепить"><Icon name="pin" size={10} /></ToolButton>
                <PlainButton aria-label="Закрыть"><Icon name="close" size={10} /></PlainButton>
            </PanelTitle>
            <Bar height={22} indent={3}>
                <ActionsButton>Действия <Icon name="caret" size={6} /></ActionsButton>
                <Tools items={treeTools} />
            </Bar>
            <SearchBox>
                <BareInput placeholder="Поиск (Ctrl+Alt+M)" aria-label="Поиск" />
                <ComboButton aria-label="Очистить"><Icon name="close" size={8} /></ComboButton>
            </SearchBox>
            <Tree>
                <TreeRow $root>
                    <Icon name="ball" size={13} />
                    <SelectedLabel>УправлениеТорговлей</SelectedLabel>
                    <Icon name="cube" size={10} />
                </TreeRow>
                {treeItems.map(item => (
                    <TreeRow key={item.name}>
                        {item.open
                            ? <Expander aria-label="Развернуть"><Icon name="plus" size={9} /></Expander>
                            : <ExpanderGap />}
                        <Icon name={item.icon} size={13} />
                        <TreeLabel>{item.name}</TreeLabel>
                    </TreeRow>
                ))}
            </Tree>
        </SidePanel>
    );
}

function ObjectCell({ row, name, check, id }) {
    return (
        <CellContent $indent={row.root ? 3 : 20}>
            <Expander aria-label={row.root ? 'Свернуть' : 'Развернуть'}>
                <Icon name={row.root ? 'minus' : 'plus'} size={9} />
            </Expander>
            {check && <Check type="checkbox" id={id} />}
            {row.icon && <Icon name={row.icon} size={13} />}
            <CellLabel htmlFor={check ? id : undefined} $gap={row.icon ? 6 : 2}>{name}</CellLabel>
        </CellContent>
    );
}

function CompareTable() {
    return (
        <TableWrap>
            <Table>
                <colgroup>
                    <Column $size="19px" />
                    <Column $size="271px" />
                    <Column $size="300px" />
                    <Column $size="21px" />
                    <Column $size="auto" />
                </colgroup>
                <thead>
                    <tr>
                        <HeadCell />
                        <HeadCell><HeadContent><Icon name="mainConfig" />Основная конфигурация</HeadContent></HeadCell>
                        <HeadCell><HeadContent><Icon name="fileConfig" />Файл</HeadContent></HeadCell>
                        <HeadCell />
                        <HeadCell>Режим объединения и порядок подчиненных объектов</HeadCell>
                    </tr>
                </thead>
                <tbody>
                    {compareRows.map((row, index) => (
                        <Row key={row.name} $selected={row.root}>
                            <Cell $fill={row.mark} />
                            <Cell $fill={row.fill}>
                                <ObjectCell row={row} name={row.name} check={row.check} id={`object-${index}`} />
                            </Cell>
                            <Cell $fill={row.fill}>
                                <ObjectCell row={row} name={row.other || row.name} />
                            </Cell>
                            <Cell />
                            <Cell />
                        </Row>
                    ))}
                    <FillerRow>
                        <Cell />
                        <Cell />
                        <Cell />
                        <Cell />
                        <Cell />
                    </FillerRow>
                </tbody>
            </Table>
        </TableWrap>
    );
}

function ComparePanel() {
    const [autoSave, setAutoSave] = useState(true);

    return (
        <Panel>
            <WindowTitle>
                <Icon name="file" size={13} />
                <h1>Сравнение, объединение Основная конфигурация - Файл D:\1c\Разработка\cf_vetis\vetis_2.8.5.cf</h1>
                <WindowButtons>
                    <WindowButton aria-label="Свернуть"><Icon name="minimize" size={11} /></WindowButton>
                    <WindowButton aria-label="Восстановить"><Icon name="restore" size={11} /></WindowButton>
                    <WindowButton aria-label="Закрыть"><Icon name="close" size={10} /></WindowButton>
                </WindowButtons>
            </WindowTitle>
            <Bar height={22} indent={3}>
                <ActionsButton>Действия <Icon name="caret" size={6} /></ActionsButton>
                <Tools items={compareTools} />
            </Bar>
            <Body>
                <CompareTable />
                <Field $top={4} $gap={1}>
                    <label htmlFor="editing">Редактирование:</label>
                    <TextInput id="editing" />
                </Field>
                <Statuses>
                    <legend>Статусы по соответствиям объектов</legend>
                    {statuses.map(status => (
                        <Status key={status.name} $color={status.color}>{status.name}</Status>
                    ))}
                    <OrderLabel><OrderCheck type="checkbox" />Изменен порядок</OrderLabel>
                </Statuses>
                <Field $top={3} $gap={4}>
                    <label htmlFor="filter">Фильтр:</label>
                    <SelectBox>
                        <Select id="filter">
                            <option>Показывать отличия в конфигурациях</option>
                        </Select>
                        <Icon name="caret" size={8} />
                    </SelectBox>
                </Field>
                <AutoSave>
                    <TickBox $on={autoSave}>
                        <Check type="checkbox" checked={autoSave} onChange={() => setAutoSave(!autoSave)} />
                        <Icon name="tick" size={8} />
                    </TickBox>
                    Сохранять настройки автоматически
                </AutoSave>
                <Footer>
                    <PushButton $width={67}>Выполнить</PushButton>
                    <PushButton $width={71}>Справка</PushButton>
                </Footer>
            </Body>
        </Panel>
    );
}

function App() {
    return (
        <Page>
            <GlobalStyle />
            <Note>3. Уберите галочки</Note>
            <Pointer />
            <Shell>
                <Bar as="nav" height={19}>
                    <Grip />
                    {menu.map(item => (
                        <MenuItem key={`${item.before}${item.key}${item.rest}`} gap={item.gap}>
                            <span>{item.before}{item.key && <u>{item.key}</u>}{item.rest}</span>
                        </MenuItem>
                    ))}
                </Bar>
                <Bar>
                    <Grip />
                    <Tools items={mainTools} />
                    <SearchCombo>
                        <BareInput aria-label="Строка поиска" />
                        <ComboButton aria-label="Список"><Icon name="caret" size={8} /></ComboButton>
                        <ComboButton aria-label="Очистить"><Icon name="close" size={8} /></ComboButton>
                    </SearchCombo>
                    <Tools items={findTools} />
                    <OverflowButton aria-label="Ещё"><Icon name="caret" size={6} /></OverflowButton>
                </Bar>
                <Bar height={24}>
                    <Grip />
                    <Tools items={configTools} />
                    <OverflowButton aria-label="Ещё"><Icon name="caret" size={6} /></OverflowButton>
                </Bar>
                <Workspace>
                    <ConfigTree />
                    <ComparePanel />
                </Workspace>
                <TaskBar>
                    <TaskButton><Icon name="file" size={13} />Сравнение, объединение О...</TaskButton>
                </TaskBar>
                <StatusBar>
                    <StatusCell $wide>Для получения подсказки нажмите F1</StatusCell>
                    <StatusCell $width={25} $off>CAP</StatusCell>
                    <StatusCell $width={29}>NUM</StatusCell>
                    <StatusCell $width={21}>ru<Icon name="caret" size={6} /></StatusCell>
                </StatusBar>
            </Shell>
        </Page>
    );
}

export default App;
